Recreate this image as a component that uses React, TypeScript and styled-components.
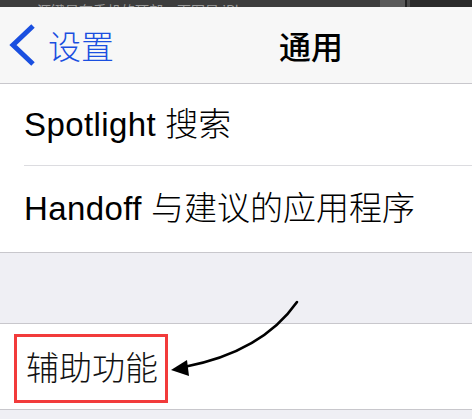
import React from "react";
import styled, { createGlobalStyle } from "styled-components";

const Global = createGlobalStyle`
  html, body { margin: 0; padding: 0; background: #efeff4; }
  body {
    font-family: "Liberation Sans", "Noto Sans CJK SC", sans-serif;
    -webkit-font-smoothing: antialiased;
  }
`;

const Page = styled.div`
  position: relative;
  width: 472px;
  height: 419px;
  overflow: hidden;
  background: #efeff4;
  display: flex;
  flex-direction: column;
`;

const Strip = styled.div`
  height: 7px;
  flex: none;
  background: #3d3d3d;
  overflow: hidden;
  display: flex;
`;

const StripText = styled.div`
  padding: 2px 0 0 37px;
  width: 343px;
  font-family: "Noto Sans CJK SC", sans-serif;
  font-size: 14px;
  line-height: 16px;
  color: #9a9a9a;
  white-space: nowrap;
`;

const StripPatch = styled.div<{ $w: number; $bg: string }>`
  width: ${(p) => p.$w}px;
  flex: none;
  background: ${(p) => p.$bg};
`;

const NavBar = styled.div`
  height: 76px;
  flex: none;
  background: #f7f7f7;
  border-bottom: 1px solid #c8c7cc;
  display: flex;
  align-items: center;
  padding-left: 8px;
`;

const Back = styled.div`
  display: flex;
  align-items: center;
  gap: 12px;
  color: #1a4fe0;
  font-family: "Noto Sans CJK SC", sans-serif;
  font-size: 33px;
  font-weight: 300;
  line-height: 40px;
`;

const Title = styled.div`
  margin-left: 165px;
  font-family: "Noto Sans CJK SC", sans-serif;
  font-size: 32px;
  font-weight: 500;
  line-height: 40px;
  color: #000;
`;

const Group = styled.div<{ $top?: boolean }>`
  flex: none;
  background: #fff;
  border-bottom: 1px solid #c8c7cc;
  border-top: ${(p) => (p.$top ? "1px solid #c8c7cc" : "none")};
  display: flex;
  flex-direction: column;
`;

const Row = styled.div<{ $h: number }>`
  height: ${(p) => p.$h}px;
  display: flex;
  align-items: center;
  padding-left: 24px;
  font-size: 33px;
  font-weight: 300;
  line-height: 36px;
  color: #000;
  white-space: nowrap;
  box-sizing: border-box;
`;

const Latin = styled.span`
  font-family: "Liberation Sans", sans-serif;
  font-weight: 400;
  letter-spacing: 0.4px;
`;

const Divider = styled.div`
  height: 1px;
  margin-left: 24px;
  background: #dcdce0;
`;

const Spacer = styled.div`
  height: 70px;
  flex: none;
`;

const HighlightRow = styled.div`
  height: 85px;
  display: flex;
  align-items: flex-start;
  padding-left: 14px;
`;

const Highlight = styled.div`
  margin-top: 10px;
  width: 154px;
  height: 69px;
  box-sizing: border-box;
  border: 3px solid #f23b3b;
  display: flex;
  align-items: center;
  padding: 0 0 6px 9px;
  font-family: "Noto Sans CJK SC", sans-serif;
  font-size: 33px;
  font-weight: 300;
  line-height: 36px;
  color: #111;
`;

const Overlay = styled.svg`
  position: absolute;
  left: 0;
  top: 0;
  pointer-events: none;
`;

export default function App() {
  return (
    <>
      <Global />
      <Page>
        <Strip>
          <StripText>源键是在手机的顶部，下图是 iPhone</StripText>
          <StripPatch $w={25} $bg="#5a5a5a" />
          <StripPatch $w={2} $bg="#222" />
          <StripPatch $w={3} $bg="#4a4a4a" />
          <StripPatch $w={62} $bg="#2b2b2b" />
        </Strip>
        <NavBar>
          <Back>
            <svg width="28" height="44" viewBox="0 0 28 44">
              <polyline
                points="25,3 5,22 25,41"
                fill="none"
                stroke="#1a4fe0"
                strokeWidth="5"
                strokeLinejoin="miter"
              />
            </svg>
            <span>设置</span>
          </Back>
          <Title>通用</Title>
        </NavBar>
        <Group>
          <Row $h={81}>
            <Latin>Spotlight</Latin>&nbsp;搜索
          </Row>
          <Divider />
          <Row $h={86}>
            <Latin>Handoff</Latin>&nbsp;与建议的应用程序
          </Row>
        </Group>
        <Spacer />
        <Group $top>
          <HighlightRow>
            <Highlight>辅助功能</Highlight>
          </HighlightRow>
        </Group>
        <Overlay width="472" height="419" viewBox="0 0 472 419">
          <path
            d="M297 302 Q 262 352 184 367"
            fill="none"
            stroke="#000"
            strokeWidth="2.6"
            strokeLinecap="round"
          />
          <polygon points="171,370 187,360 189,376" fill="#000" />
        </Overlay>
      </Page>
    </>
  );
}
